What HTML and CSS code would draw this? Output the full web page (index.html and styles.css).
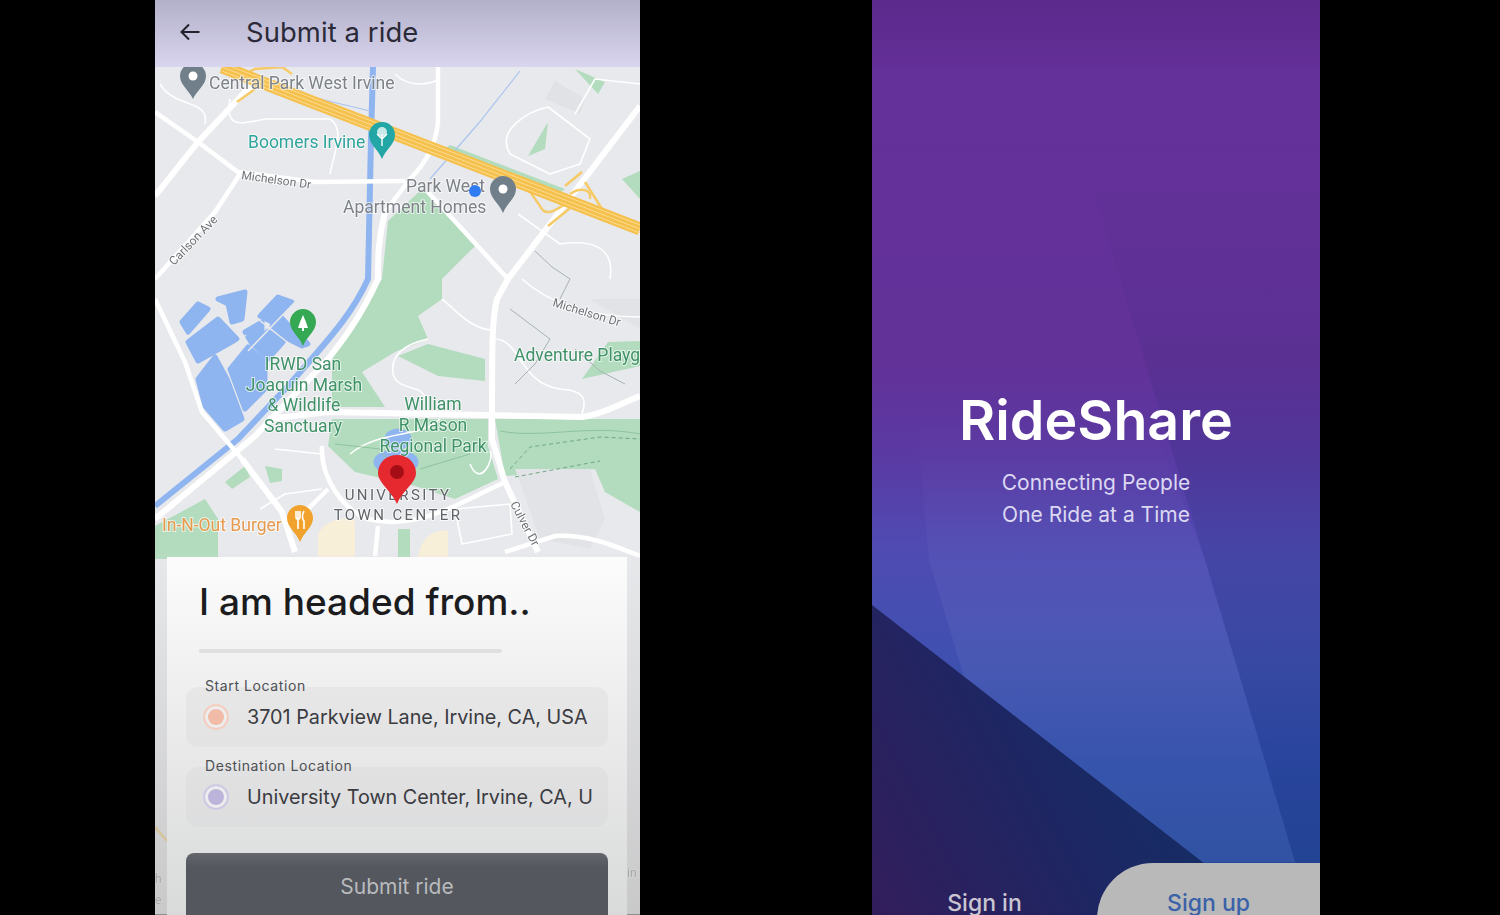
FILE: index.html
```html
<!DOCTYPE html>
<html lang="en">
<head>
    <meta charset="UTF-8">
    <title>RideShare</title>
    <link rel="stylesheet" href="styles.css">
</head>
<body>
    <div class="stage">
        <!-- Submit ride screen -->
        <div class="phone phone-map">
            <div class="topbar">
                <svg class="back" viewBox="0 0 24 24" width="24" height="24">
                    <path d="M21.5 12H3.5M11 4.5L3.5 12l7.5 7.5" fill="none" stroke="#22222e" stroke-width="2"/>
                </svg>
                <span class="topbar-title">Submit a ride</span>
            </div>

            <div class="map">
                <svg class="map-svg" viewBox="155 68 485 847" width="485" height="847">
                    <rect x="155" y="68" width="485" height="847" fill="#e8e9ec"/>

                    <!-- parks -->
                    <g class="park">
                        <path d="M388 222L422 190L475 247L442 280V300L418 317L428 340L395 353L362 373L385 408H332V360L382 280Z"/>
                        <path d="M398 357L428 345L485 360V382L438 377Z"/>
                        <path d="M332 420H488V447L498 480L455 500L415 487L355 473L328 447Z"/>
                        <path d="M495 420H640V513L605 493L595 470L505 477Z"/>
                        <path d="M608 343L640 342V367L582 380Z"/>
                        <path d="M575 70L605 83L598 95Z"/>
                        <path d="M528 157L548 123L545 150Z"/>
                        <path d="M450 146L565 190L560 194L445 150Z"/>
                        <path d="M155 527L205 500L218 520V560H155Z"/>
                        <path d="M265 467L282 470L282 482L270 484Z"/>
                        <path d="M398 530H410V560H398Z"/>
                        <path d="M622 180L640 172V200Z"/>
                        <path d="M225 483L245 467L250 478L232 490Z"/>
                    </g>
                    <g fill="#f8efd9">
                        <path d="M318 536C322 522 345 516 355 522V560H318Z"/>
                        <path d="M418 560C420 540 432 530 448 532V560Z"/>
                    </g>
                    <path d="M555 82L585 100L580 115L545 100Z" fill="#e1e2e5"/>
                    <path d="M515 470H590L605 520L590 550L540 540Z" fill="#e2e3e6"/>
                    <path d="M590 300H640V330L620 318Z" fill="#e2e3e6"/>

                    <!-- water -->
                    <g class="lake">
                        <path d="M188 343L218 320L237 340L198 362Z"/>
                        <path d="M198 380L215 358L227 380L242 420L225 430L205 407Z"/>
                        <path d="M230 370L248 348L265 363V390L245 410Z"/>
                        <path d="M182 323L198 305L208 310L188 333Z"/>
                        <path d="M218 300L245 293L242 320L232 323L228 305Z"/>
                        <path d="M245 333L262 323V340L252 345Z"/>
                        <path d="M260 317L278 298L292 303L272 323Z"/>
                        <path d="M255 347L268 332L283 343L268 360Z"/>
                        <path d="M272 327L280 317L292 330L285 340Z"/>
                        <path d="M288 340L297 333L308 345L302 347Z"/>
                        <ellipse cx="398" cy="440" rx="11" ry="8"/>
                        <ellipse cx="396" cy="463" rx="20" ry="10"/>
                    </g>
                    <path class="dike" d="M258 320L296 350M248 352L298 300M228 352L246 336"/>
                    <path class="water" d="M373 68L371 140L368 280C350 320 322 347 290 385L238 440L155 507"/>
                    <path class="creek" d="M520 72L478 125L430 180M320 100L370 112"/>

                    <!-- streets -->
                    <g class="street-sm">
                        <path d="M438 68V123C436 145 425 165 410 180L385 213"/>
                        <path d="M315 183L405 182"/>
                        <path d="M155 300L185 363L202 413L242 460"/>
                        <path d="M322 447C320 480 345 512 368 520C400 528 430 518 455 507L505 483"/>
                        <path d="M308 510L328 490"/>
                        <path d="M505 553L555 537C585 535 610 545 640 557"/>
                        <path d="M378 527L375 557"/>
                        <path d="M428 193L508 280"/>
                        <path d="M240 175L215 213L155 280"/>
                        <path d="M155 113L198 143L238 173L315 183"/>
                    </g>
                    <g class="street">
                        <path d="M155 197L198 143L245 93L262 80"/>
                        <path d="M640 107L508 280L497 300C492 320 492 340 492 440L505 483L538 553"/>
                        <path d="M268 420L328 413L582 418C600 416 620 405 640 397"/>
                        <path d="M385 213C378 240 378 260 378 280C360 320 340 345 328 360L255 437L155 520"/>
                        <path d="M242 460L282 513L295 553"/>
                    </g>
                    <g class="street-thin">
                        <path d="M522 280C550 305 590 318 640 318"/>
                        <path d="M442 300C455 310 470 330 492 331"/>
                        <path d="M428 340C405 345 390 355 393 375C398 392 420 385 425 398"/>
                        <path d="M510 155C495 130 530 112 548 108L590 140L580 165L550 175Z"/>
                        <path d="M575 115L595 80L640 85"/>
                        <path d="M495 340C520 340 520 385 560 390C590 392 585 405 582 415"/>
                        <path d="M260 510L285 495L322 490M275 450L322 455"/>
                        <path d="M470 465C480 490 495 460 490 452"/>
                        <path d="M455 510L510 505L512 535L462 545Z"/>
                        <path d="M230 100C225 130 240 125 265 120L330 120C345 130 335 150 330 175"/>
                        <path d="M518 215L560 245C595 240 615 250 610 280"/>
                        <path d="M160 85C175 110 210 100 205 125"/>
                        <path d="M395 75C410 90 430 85 440 80"/>
                        <path d="M350 455C380 430 420 440 440 420"/>
                    </g>
                    <g class="trail">
                        <path d="M535 252L552 268L570 280L560 300"/>
                        <path d="M510 310L530 325L550 340L535 365L515 385"/>
                        <path d="M575 350L600 372L625 385"/>
                    </g>
                    <g class="trail-park">
                        <path d="M335 445L380 450L400 480"/>
                        <path d="M420 470L470 455"/>
                        <path d="M500 432C540 440 590 425 640 435"/>
                    </g>
                    <path class="trail-green" d="M510 470L530 448L600 438L640 440M515 478L600 462"/>

                    <!-- freeway and ramps -->
                    <g class="ramp">
                        <path d="M222 68L235 80L255 70L282 68L292 75"/>
                        <path d="M237 103L255 90"/>
                        <path d="M520 178L540 207C545 218 555 212 565 205"/>
                        <path d="M565 187L582 173"/>
                        <path d="M585 183L602 210"/>
                        <path d="M548 227L575 205"/>
                        <path d="M570 195C580 188 592 190 590 200"/>
                    </g>
                    <path class="freeway" d="M222 68L640 230"/>
                    <path class="freeway-line" d="M222 64L640 226M222 68L640 230M222 72L640 234"/>

                    <!-- place labels -->
                    <text class="lbl lbl-grey" x="209" y="90">Central Park West Irvine</text>
                    <text class="lbl lbl-teal" x="248" y="149">Boomers Irvine</text>
                    <text class="lbl lbl-grey" x="406" y="193">Park West</text>
                    <text class="lbl lbl-grey" x="343" y="214">Apartment Homes</text>
                    <text class="road" transform="translate(241 180) rotate(8)">Michelson Dr</text>
                    <text class="road" transform="translate(552 307) rotate(17)">Michelson Dr</text>
                    <text class="road" transform="translate(174 267) rotate(-46)">Carlson Ave</text>
                    <text class="road" transform="translate(510 505) rotate(62)">Culver Dr</text>
                    <text class="lbl lbl-green" x="514" y="362">Adventure Playg</text>
                    <g class="lbl lbl-green lbl-mid">
                        <text x="303" y="371">IRWD San</text>
                        <text x="304" y="392">Joaquin Marsh</text>
                        <text x="304" y="412">&amp; Wildlife</text>
                        <text x="303" y="433">Sanctuary</text>
                        <text x="433" y="411">William</text>
                        <text x="433" y="432">R Mason</text>
                        <text x="433" y="453">Regional Park</text>
                    </g>
                    <text class="lbl lbl-orange" x="162" y="532">In-N-Out Burger</text>
                    <text class="lbl-area" x="398" y="501">UNIVERSITY</text>
                    <text class="lbl-area" x="398" y="521">TOWN CENTER</text>

                    <!-- pins -->
                    <path class="pin-grey" d="M193 64C200 64 206 70 206 77C206 86 197 91 193 100C189 91 180 86 180 77C180 70 186 64 193 64Z"/>
                    <circle cx="193" cy="77" r="4.5" fill="#fff"/>
                    <path fill="#23a6a6" d="M382 123C390 123 395 129 395 136C395 145 386 150 382 160C378 150 369 145 369 136C369 129 374 123 382 123Z"/>
                    <path fill="none" stroke="#fff" stroke-width="1.4" d="M382 147V135M382 140L377 135M382 140L387 135"/>
                    <circle cx="382" cy="133" r="5" fill="#fff" fill-opacity="0.75"/>
                    <path class="pin-grey" d="M503 177C510 177 516 183 516 190C516 199 507 204 503 214C499 204 490 199 490 190C490 183 496 177 503 177Z"/>
                    <circle cx="503" cy="190" r="4.5" fill="#fff"/>
                    <circle cx="475" cy="192" r="6" fill="#2f7bf2"/>
                    <path fill="#34a853" d="M303 310C310 310 316 316 316 323C316 332 307 337 303 347C299 337 290 332 290 323C290 316 296 310 303 310Z"/>
                    <path fill="#fff" d="M303 316L306 323L308 329H304V332H302V329H298L300 323Z"/>
                    <path fill="#f0a22c" d="M300 506C307 506 313 512 313 519C313 528 304 533 300 543C296 533 287 528 287 519C287 512 293 506 300 506Z"/>
                    <path fill="none" stroke="#fff" stroke-width="1.6" d="M296 512V518C296 521 300 521 300 518V512M298 512V530M304 512C302 515 302 520 304 522V530"/>
                    <path fill="#e6292f" d="M397 456C408 456 416 464 416 474C416 484 403 491 397 505C391 491 378 484 378 474C378 464 386 456 397 456Z"/>
                    <circle cx="397" cy="473" r="7" fill="#a50e14"/>

                    <!-- bits of map showing beside the card -->
                    <path class="ramp" d="M155 828L167 842"/>
                    <text class="road" x="155" y="884">h</text>
                    <text class="road" x="155" y="905">e</text>
                    <text class="road" x="627" y="878">in</text>
                </svg>
                <div class="map-fade"></div>
            </div>

            <div class="card">
                <h1 class="card-title">I am headed from..</h1>
                <div class="card-rule"></div>
                <div class="field">
                    <label class="field-label">Start Location</label>
                    <div class="field-box">
                        <span class="dot dot-start"></span>
                        <span class="field-text">3701 Parkview Lane, Irvine, CA, USA</span>
                    </div>
                </div>
                <div class="field">
                    <label class="field-label">Destination Location</label>
                    <div class="field-box">
                        <span class="dot dot-end"></span>
                        <span class="field-text">University Town Center, Irvine, CA, U</span>
                    </div>
                </div>
                <button class="submit" type="button">Submit ride</button>
            </div>
        </div>

        <!-- Welcome screen -->
        <div class="phone phone-welcome">
            <svg class="welcome-bg" viewBox="872 0 448 915" width="448" height="915">
                <defs>
                    <linearGradient id="beam" x1="0" y1="0" x2="0" y2="1">
                        <stop offset="0" stop-color="#fff" stop-opacity="0"/>
                        <stop offset="0.35" stop-color="#fff" stop-opacity="0"/>
                        <stop offset="0.65" stop-color="#fff" stop-opacity="0.05"/>
                        <stop offset="1" stop-color="#fff" stop-opacity="0.05"/>
                    </linearGradient>
                    <linearGradient id="beam-right" x1="0" y1="0" x2="0" y2="1">
                        <stop offset="0" stop-color="#10205a" stop-opacity="0"/>
                        <stop offset="0.4" stop-color="#10205a" stop-opacity="0.14"/>
                        <stop offset="1" stop-color="#10205a" stop-opacity="0.16"/>
                    </linearGradient>
                    <linearGradient id="dark" x1="0" y1="1" x2="1" y2="0.5">
                        <stop offset="0" stop-color="#331d5c"/>
                        <stop offset="0.6" stop-color="#1c2763"/>
                        <stop offset="1" stop-color="#142e66"/>
                    </linearGradient>
                </defs>
                <path fill="url(#beam-right)" d="M1090 180L1205 560L1295 862L1320 880V180Z"/>
                <path fill="url(#beam)" d="M1060 180L1205 560L1295 862H1190L965 680L929 560L915 400Z"/>
                <path fill="url(#dark)" d="M872 605L1205 864V915H872Z"/>
            </svg>
            <div class="welcome-center">
                <h1 class="brand">RideShare</h1>
                <p class="tagline">Connecting People<br>One Ride at a Time</p>
            </div>
            <div class="welcome-actions">
                <button class="btn-signin" type="button">Sign in</button>
                <button class="btn-signup" type="button">Sign up</button>
            </div>
        </div>
    </div>
</body>
</html>
```

FILE: styles.css
```css
/* Page */
html, body {
    margin: 0;
    padding: 0;
    height: 100%;
    background: #000;
    overflow: hidden;
}
.stage {
    display: flex;
    gap: 232px;
    height: 915px;
    padding-left: 155px;
    font-family: 'Inter', 'Liberation Sans', sans-serif;
}
.phone {
    position: relative;
    height: 915px;
    overflow: hidden;
    flex: none;
}

/* Submit ride screen */
.phone-map {
    width: 485px;
    display: flex;
    flex-direction: column;
}
.topbar {
    height: 67px;
    flex: none;
    display: flex;
    align-items: center;
    padding: 0 0 4px 23px;
    box-sizing: border-box;
    background: linear-gradient(180deg, #b3b0c9, #d9d5ee);
}
.back {
    flex: none;
}
.topbar-title {
    margin-left: 44px;
    font-size: 27.4px;
    color: #2a2a38;
    letter-spacing: 0.1px;
}

/* Map */
.map {
    position: relative;
    flex: 1;
    filter: blur(0.5px);
}
.map-svg {
    display: block;
}
.map-fade {
    position: absolute;
    left: 0;
    right: 0;
    top: 487px;
    bottom: 0;
    background: linear-gradient(180deg, rgba(225, 225, 225, 0.1), rgba(190, 190, 190, 0.75));
}
.park { fill: #b2dcbd; }
.lake { fill: #8fb5f0; stroke: #8fb5f0; stroke-width: 5; stroke-linejoin: round; }
.dike { fill: none; stroke: #e8e9ec; stroke-width: 1.5; }
.street { fill: none; stroke: #fff; stroke-width: 6; }
.street-sm { fill: none; stroke: #fff; stroke-width: 4.5; }
.street-thin { fill: none; stroke: #fff; stroke-width: 1.6; stroke-linejoin: round; }
.water { fill: none; stroke: #8fb5f0; stroke-width: 6; }
.creek { fill: none; stroke: #a9c4ee; stroke-width: 1.2; }
.trail { fill: none; stroke: #a6b3b0; stroke-width: 1; }
.trail-park { fill: none; stroke: #8fc3a0; stroke-width: 1; }
.trail-green { fill: none; stroke: #6fa884; stroke-width: 1; stroke-dasharray: 4 3; }
.ramp { fill: none; stroke: #f6ca66; stroke-width: 2.5; }
.freeway { fill: none; stroke: #f5c04e; stroke-width: 13; }
.freeway-line { fill: none; stroke: #fbdc8e; stroke-width: 1; }
.pin-grey { fill: #717f8b; }

.lbl, .lbl-mid text {
    font-family: 'Roboto', 'Liberation Sans', sans-serif;
    font-size: 17.5px;
    paint-order: stroke;
    stroke: rgba(255, 255, 255, 0.65);
    stroke-width: 2px;
}
.lbl-mid { text-anchor: middle; }
.lbl-grey { fill: #7c8288; }
.lbl-teal { fill: #2fa49c; }
.lbl-green { fill: #3f9268; }
.lbl-orange { fill: #e79a4e; }
.lbl-area {
    font-family: 'Roboto', 'Liberation Sans', sans-serif;
    font-size: 15px;
    letter-spacing: 2.4px;
    text-anchor: middle;
    fill: #5f6368;
    paint-order: stroke;
    stroke: rgba(255, 255, 255, 0.7);
    stroke-width: 2px;
}
.road {
    font-family: 'Roboto', 'Liberation Sans', sans-serif;
    font-size: 12px;
    fill: #6f7377;
    paint-order: stroke;
    stroke: rgba(255, 255, 255, 0.7);
    stroke-width: 2px;
}

/* Bottom card */
.card {
    position: absolute;
    left: 12px;
    right: 13px;
    top: 557px;
    bottom: 0;
    padding: 22px 19px 0;
    background: linear-gradient(180deg, #fcfcfc, #ececec 45%, #d9dada);
}
.card-title {
    margin: 0 0 0 13px;
    font-size: 37px;
    line-height: 46px;
    font-weight: 500;
    color: #1c1c1e;
}
.card-rule {
    width: 303px;
    height: 4px;
    margin: 24px 0 34px 13px;
    background: #dfdfdf;
    border-radius: 2px;
}
.field {
    position: relative;
    margin-bottom: 20px;
}
.field-label {
    position: absolute;
    left: 19px;
    top: -10px;
    font-size: 14px;
    line-height: 18px;
    letter-spacing: 0.6px;
    color: #4d5054;
}
.field-box {
    height: 60px;
    display: flex;
    align-items: center;
    padding-left: 17px;
    border-radius: 12px;
    background: rgba(205, 205, 208, 0.22);
}
.dot {
    flex: none;
    box-sizing: border-box;
    width: 26px;
    height: 26px;
    border-radius: 50%;
    border: 2px solid;
    box-shadow: inset 0 0 0 3px #ededed;
}
.dot-start {
    border-color: #f3cfc2;
    background-color: #f1bba8;
}
.dot-end {
    border-color: #cfc9e4;
    background-color: #bdb4dc;
}
.field-text {
    margin-left: 18px;
    font-size: 19.8px;
    color: #3a3b40;
    white-space: nowrap;
}
.submit {
    display: block;
    width: 422px;
    height: 70px;
    margin-top: 26px;
    padding-bottom: 4px;
    border: none;
    border-radius: 8px;
    background: linear-gradient(180deg, #63666d 0, #54575e 14px);
    color: #b9bbbd;
    font-family: inherit;
    font-size: 21px;
}

/* Welcome screen */
.phone-welcome {
    width: 448px;
    background:
        linear-gradient(180deg, #5b2a8c 0, #643099 8%, #623299 40%, #5a3aa3 50%, #4f4bb3 60%, #3f50b0 72%, #2c4ba8 84%, #234898 100%);
}
.welcome-bg {
    position: absolute;
    left: 0;
    top: 0;
}
.welcome-center {
    position: absolute;
    left: 0;
    right: 0;
    top: 385px;
    text-align: center;
}
.brand {
    margin: 0;
    font-size: 55.5px;
    line-height: 70px;
    font-weight: 600;
    color: #fff;
}
.tagline {
    margin: 12px 0 0;
    font-size: 21px;
    line-height: 32px;
    color: #dcd8f2;
}
.welcome-actions {
    position: absolute;
    left: 0;
    right: 0;
    top: 863px;
    display: flex;
    height: 80px;
}
.btn-signin, .btn-signup {
    border: none;
    padding: 0;
    font-family: inherit;
    font-size: 23px;
    font-weight: 500;
}
.btn-signin {
    width: 225px;
    background: none;
    color: #c9c6d2;
}
.btn-signup {
    flex: 1;
    border-top-left-radius: 56px;
    background: #b9b9b9;
    color: #3a62a8;
}
```
